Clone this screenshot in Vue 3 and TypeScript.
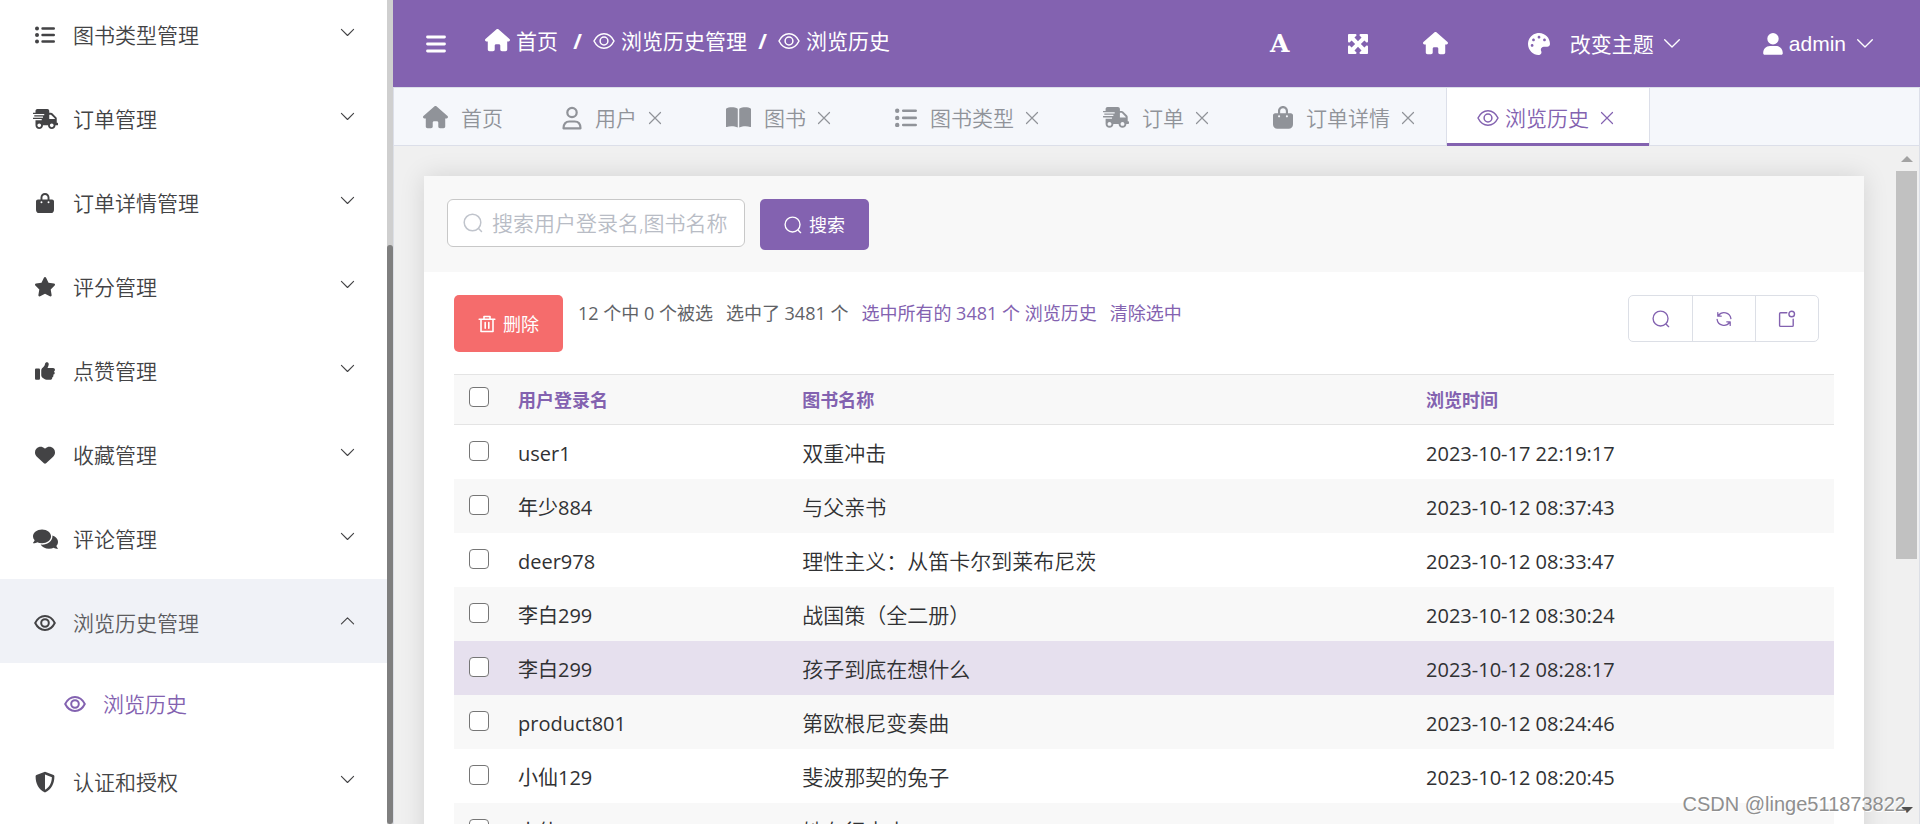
<script setup lang="ts">
import { computed, defineComponent, h, ref } from 'vue'

interface Glyph {
  box: string
  body: string
}

const solid = (box: string, d: string): Glyph => ({ box, body: `<path fill="currentColor" fill-rule="evenodd" d="${d}"/>` })
const line = (box: string, body: string, width: number): Glyph => ({
  box,
  body: `<g fill="none" stroke="currentColor" stroke-width="${width}" stroke-linecap="round" stroke-linejoin="round">${body}</g>`,
})

const glyphs: Record<string, Glyph> = {
  list: line('0 0 20 18', '<path stroke-width="4" d="M2 2.5h.01M2 9h.01M2 15.5h.01"/><path d="M7.5 2.5h11.3M7.5 9h11.3M7.5 15.5h11.3"/>', 2.4),
  truck: solid('0 0 640 512', 'M624 352h-16V243.9c0-12.7-5.1-24.9-14.1-33.9L494 110.1c-9-9-21.2-14.1-33.9-14.1H416V48c0-26.5-21.5-48-48-48H112C85.5 0 64 21.5 64 48v48H8c-4.4 0-8 3.6-8 8v16c0 4.4 3.6 8 8 8h272c4.4 0 8 3.6 8 8v16c0 4.4-3.6 8-8 8H40c-4.4 0-8 3.6-8 8v16c0 4.4 3.6 8 8 8h208c4.4 0 8 3.6 8 8v16c0 4.4-3.6 8-8 8H8c-4.4 0-8 3.6-8 8v16c0 4.4 3.6 8 8 8h208c4.4 0 8 3.6 8 8v16c0 4.4-3.6 8-8 8H64v128c0 53 43 96 96 96s96-43 96-96h128c0 53 43 96 96 96s96-43 96-96h48c8.8 0 16-7.2 16-16v-32c0-8.8-7.2-16-16-16zM160 464c-26.5 0-48-21.5-48-48s21.5-48 48-48 48 21.5 48 48-21.5 48-48 48zm320 0c-26.5 0-48-21.5-48-48s21.5-48 48-48 48 21.5 48 48-21.5 48-48 48zm80-208H416V144h44.1l99.9 99.9V256z'),
  bag: solid('0 0 448 512', 'M160 112c0-35.3 28.7-64 64-64s64 28.7 64 64v48H160V112zm-48 48H48c-26.5 0-48 21.5-48 48V416c0 53 43 96 96 96H352c53 0 96-43 96-96V208c0-26.5-21.5-48-48-48H336V112C336 50.1 285.9 0 224 0S112 50.1 112 112v48zm24 48a24 24 0 1 1 0 48 24 24 0 1 1 0-48zm152 24a24 24 0 1 1 48 0 24 24 0 1 1 -48 0z'),
  star: solid('24 0 528 512', 'M316.9 18C311.6 7 300.4 0 288.1 0s-23.4 7-28.8 18L195 150.3 51.4 171.5c-12 1.8-22 10.2-25.7 21.7s-.7 24.2 7.9 32.7L137.8 329 113.2 474.7c-2 12 3 24.2 12.9 31.3s23 8 33.8 2.3l128.3-68.5 128.3 68.5c10.8 5.7 23.9 4.9 33.8-2.3s14.9-19.3 12.9-31.3L438.5 329 542.7 225.9c8.6-8.5 11.7-21.2 7.9-32.7s-13.7-19.9-25.7-21.7L381.2 150.3 316.9 18z'),
  thumb: solid('0 0 512 512', 'M313.4 32.9c26 5.2 42.9 30.5 37.7 56.5l-2.3 11.4c-5.3 26.7-15.1 52.1-28.8 75.2H464c26.5 0 48 21.5 48 48c0 18.5-10.5 34.6-25.9 42.6C497 275.4 504 288.9 504 304c0 23.4-16.8 42.9-38.9 47.1c4.4 7.3 6.9 15.8 6.9 24.9c0 21.3-13.9 39.4-33.1 45.6c.7 3.3 1.1 6.8 1.1 10.4c0 26.5-21.5 48-48 48H294.5c-19 0-37.5-5.6-53.3-16.1l-38.5-25.7C176 420.4 160 390.4 160 358.3V320 272 247.1c0-29.2 13.3-56.7 36-75l7.4-5.9c26.5-21.2 44.6-51 51.2-84.2l2.3-11.4c5.2-26 30.5-42.9 56.5-37.7zM32 192H96c17.7 0 32 14.3 32 32V448c0 17.7-14.3 32-32 32H32c-17.7 0-32-14.3-32-32V224c0-17.7 14.3-32 32-32z'),
  heart: solid('0 0 512 512', 'M47.6 300.4L228.3 469.1c7.5 7 17.4 10.9 27.7 10.9s20.2-3.9 27.7-10.9L464.4 300.4c30.4-28.3 47.6-68 47.6-109.5v-5.8c0-69.9-50.5-129.5-119.4-141C347 36.5 300.6 51.4 268 84L256 96 244 84c-32.6-32.6-79-47.5-124.6-39.9C50.5 55.6 0 115.2 0 185.1v5.8c0 41.5 17.2 81.2 47.6 109.5z'),
  comments: solid('0 0 576 512', 'M416 192c0-88.4-93.1-160-208-160S0 103.6 0 192c0 34.3 14.1 65.9 38 92-13.4 30.2-35.5 54.2-35.8 54.5-2.2 2.3-2.8 5.7-1.5 8.7S4.8 352 8 352c36.6 0 66.9-12.3 88.7-25 32.2 15.7 70.3 25 111.3 25 114.9 0 208-71.6 208-160zm122 220c23.9-26 38-57.7 38-92 0-66.9-53.5-124.2-129.3-148.1.9 6.6 1.3 13.3 1.3 20.1 0 105.9-107.7 192-240 192-10.8 0-21.3-.8-31.7-1.9C207.8 439.6 281.8 480 368 480c41 0 79.1-9.2 111.3-25 21.8 12.7 52.1 25 88.7 25 3.2 0 6.1-1.9 7.3-4.8 1.3-2.9.7-6.3-1.5-8.7-.3-.3-22.4-24.2-35.8-54.5z'),
  eye: line('0 0 22 18', '<path d="M1.2 9C3.4 4.6 6.8 2 11 2s7.600 2.600 9.800 7c-2.200 4.400-5.600 7-9.800 7S3.400 13.400 1.200 9z"/><circle cx="11" cy="9" r="3.800"/>', 2),
  eyeThin: line('0 0 22 18', '<path d="M1 9C3.300 4.400 6.800 1.800 11 1.800S18.700 4.400 21 9c-2.300 4.600-5.800 7.200-10 7.200S3.300 13.600 1 9z"/><circle cx="11" cy="9" r="3.900"/>', 1.5),
  shield: solid('0 0 20 22', 'M10 .8 18.600 4c.5.200.8.600.8 1.200C19.400 12.500 16.500 18.600 10 21.400 3.500 18.600.6 12.500.6 5.200.6 4.600.9 4.200 1.400 4zM10 3.600V18.700c4.500-2.300 6.700-6.900 6.900-12.500z'),
  home: solid('0 0 576 512', 'M575.8 255.5c0 18-15 32.1-32 32.1h-32l.7 160.2c0 2.7-.2 5.400-.5 8.100V472c0 22.100-17.900 40-40 40H392c-22.100 0-40-17.900-40-40V384c0-17.700-14.300-32-32-32H256c-17.700 0-32 14.300-32 32v88c0 22.100-17.900 40-40 40H104c-22.100 0-40-17.900-40-40V287.600H32c-18 0-32-14-32-32.100c0-9 3-17 10-24L266.400 8c7-7 15-8 22-8s15 2 21 7L564.800 231.500c8 7 12 15 11 24z'),
  person: line('0 0 20 24', '<circle cx="10" cy="6.500" r="4.700"/><path d="M1.500 22.300c0-4.300 2.300-6.800 5.800-6.800h5.400c3.500 0 5.800 2.500 5.800 6.800z"/>', 2.2),
  book: solid('0 0 24 20', 'M0 1.600C3-.2 8 0 11.300 1.600V19.600C8 18.200 3.500 18 .9 19.200.4 19.400 0 19.200 0 18.700zM24 1.600C21-.2 16 0 12.700 1.600V19.600c3.300-1.400 7.800-1.600 10.400-.4.500.2.900 0 .9-.5z'),
  expand: solid('32 32 448 448', 'M200 32H56C42.700 32 32 42.700 32 56V200c0 9.700 5.800 18.500 14.800 22.200s19.300 1.700 26.200-5.200l40-40 79 79-79 79-40-40c-6.900-6.900-17.200-8.900-26.200-5.200S32 302.300 32 312V456c0 13.300 10.700 24 24 24H200c9.700 0 18.500-5.800 22.200-14.800s1.700-19.300-5.200-26.200l-40-40 79-79 79 79-40 40c-6.900 6.900-8.900 17.200-5.200 26.200s12.500 14.800 22.200 14.800H456c13.300 0 24-10.700 24-24V312c0-9.700-5.800-18.500-14.800-22.200s-19.300-1.700-26.200 5.200l-40 40-79-79 79-79 40 40c6.900 6.900 17.200 8.900 26.200 5.200s14.800-12.500 14.800-22.200V56c0-13.300-10.700-24-24-24H312c-9.700 0-18.500 5.800-22.200 14.800s-1.700 19.300 5.200 26.200l40 40-79 79-79-79 40-40c6.900-6.900 8.900-17.200 5.200-26.200S209.700 32 200 32z'),
  palette: solid('0 0 512 512', 'M204.300 5C104.900 24.400 24.800 104.300 5.200 203.400c-37 187 131.700 326.400 258.800 306.700 41.200-6.400 61.400-54.600 42.500-91.700-23.100-45.400 9.900-98.400 60.900-98.400h79.700c35.800 0 64.800-29.600 64.900-65.300C511.500 97.100 368.100-26.900 204.300 5zM96 320c-17.700 0-32-14.300-32-32s14.300-32 32-32 32 14.300 32 32-14.300 32-32 32zm32-128c-17.700 0-32-14.300-32-32s14.300-32 32-32 32 14.300 32 32-14.300 32-32 32zm128-64c-17.700 0-32-14.300-32-32s14.300-32 32-32 32 14.300 32 32-14.300 32-32 32zm128 64c-17.700 0-32-14.300-32-32s14.300-32 32-32 32 14.300 32 32-14.300 32-32 32z'),
  user: solid('0 0 20 22', 'M10 11.500a5.700 5.700 0 1 0 0-11.400 5.700 5.700 0 1 0 0 11.400zM7 13C3 13 .2 16 .2 20.300c0 .9.600 1.500 1.500 1.500h16.600c.9 0 1.500-.6 1.500-1.500C19.800 16 17 13 13 13z'),
  menu: line('0 0 20 18', '<path d="M1.500 2h17M1.500 9h17M1.500 16h17"/>', 2.8),
  down: line('0 0 16 10', '<path d="M1.500 1.500 8 8l6.500-6.500"/>', 1.2),
  up: line('0 0 16 10', '<path d="M1.500 8.500 8 2l6.500 6.500"/>', 1.2),
  close: line('0 0 14 14', '<path d="M1.500 1.500l11 11M12.500 1.500l-11 11"/>', 1.2),
  search: line('0 0 20 20', '<circle cx="9.500" cy="9.500" r="8.300"/><path d="M15.800 15.800l2.700 2.700"/>', 1.5),
  trash: line('0 0 18 18', '<path d="M1.200 4.300h15.600M3 4.300v12.200h12V4.300M6 4V1.500h6V4M7.200 7.500v5.800M10.800 7.500v5.800"/>', 1.6),
  refresh: line('0 0 18 18', '<path d="M2.800 2.600v3.600h3.400M3.400 5.600A6.900 6.900 0 0 1 15.900 8.600M15.200 15.400v-3.600h-3.400M14.600 12.400A6.900 6.900 0 0 1 2.100 9.400"/>', 1.3),
  notice: line('0 0 18 18', '<path d="M8.800 2.800H2.600c-.6 0-1 .4-1 1v11.600c0 .6.400 1 1 1h11.600c.6 0 1-.4 1-1V9.200"/><circle cx="13.700" cy="4" r="2.800"/>', 1.4),
}

const Icon = defineComponent({
  props: { name: { type: String, required: true } },
  setup: (props) => () =>
    h('svg', { viewBox: glyphs[props.name].box, innerHTML: glyphs[props.name].body, 'aria-hidden': 'true' }),
})

interface MenuEntry {
  label: string
  icon: string
  size: string
}

const topMenu: MenuEntry[] = [
  { label: '图书类型管理', icon: 'list', size: 'w20' },
  { label: '订单管理', icon: 'truck', size: 'w25' },
  { label: '订单详情管理', icon: 'bag', size: 'w18' },
  { label: '评分管理', icon: 'star', size: 'w20' },
  { label: '点赞管理', icon: 'thumb', size: 'w20' },
  { label: '收藏管理', icon: 'heart', size: 'w20' },
  { label: '评论管理', icon: 'comments', size: 'w25' },
]

const crumbs = [
  { label: '首页', icon: 'home', size: 'w25' },
  { label: '浏览历史管理', icon: 'eyeThin', size: 'w22' },
  { label: '浏览历史', icon: 'eyeThin', size: 'w22' },
]

const tabs = [
  { label: '首页', icon: 'home', size: 'w25', fixed: true },
  { label: '用户', icon: 'person', size: 'w20' },
  { label: '图书', icon: 'book', size: 'w25' },
  { label: '图书类型', icon: 'list', size: 'w22' },
  { label: '订单', icon: 'truck', size: 'w26' },
  { label: '订单详情', icon: 'bag', size: 'w20' },
  { label: '浏览历史', icon: 'eyeThin', size: 'w22', active: true },
]

interface Row {
  user: string
  title: string
  time: string
  hover?: boolean
}

const rows = ref<Row[]>([
  { user: 'user1', title: '双重冲击', time: '2023-10-17 22:19:17' },
  { user: '年少884', title: '与父亲书', time: '2023-10-12 08:37:43' },
  { user: 'deer978', title: '理性主义：从笛卡尔到莱布尼茨', time: '2023-10-12 08:33:47' },
  { user: '李白299', title: '战国策（全二册）', time: '2023-10-12 08:30:24' },
  { user: '李白299', title: '孩子到底在想什么', time: '2023-10-12 08:28:17', hover: true },
  { user: 'product801', title: '第欧根尼变奏曲', time: '2023-10-12 08:24:46' },
  { user: '小仙129', title: '斐波那契的兔子', time: '2023-10-12 08:20:45' },
  { user: '小仙129', title: '她在行走中', time: '2023-10-12 08:18:32' },
])

const picked = ref<number[]>([])
const keyword = ref('')
const allPicked = computed(() => picked.value.length === rows.value.length)
const toggleAll = () => {
  picked.value = allPicked.value ? [] : rows.value.map((_, i) => i)
}
</script>

<template>
  <div class="shell">
    <aside class="side">
      <nav class="menu">
        <button v-for="m in topMenu" :key="m.label" type="button" class="entry">
          <span class="slot"><Icon :name="m.icon" :class="m.size" /></span>
          <span class="label">{{ m.label }}</span>
          <Icon name="down" class="chev" />
        </button>
        <button type="button" class="entry open">
          <span class="slot"><Icon name="eye" class="w22" /></span>
          <span class="label">浏览历史管理</span>
          <Icon name="up" class="chev" />
        </button>
        <a href="#history" class="sub">
          <Icon name="eye" class="w22" />
          <span>浏览历史</span>
        </a>
        <button type="button" class="entry">
          <span class="slot"><Icon name="shield" class="w20" /></span>
          <span class="label">认证和授权</span>
          <Icon name="down" class="chev" />
        </button>
      </nav>
      <div class="side-track"><div class="side-thumb"></div></div>
    </aside>

    <div class="main">
      <header class="bar">
        <button type="button" class="plain" aria-label="菜单"><Icon name="menu" class="w20" /></button>
        <nav class="crumbs">
          <template v-for="(c, i) in crumbs" :key="c.label">
            <span v-if="i" class="slash">/</span>
            <a href="#" class="crumb"><Icon :name="c.icon" :class="c.size" />{{ c.label }}</a>
          </template>
        </nav>
        <div class="tools">
          <button type="button" class="plain tool letter">A</button>
          <button type="button" class="plain tool" aria-label="全屏"><Icon name="expand" class="w20" /></button>
          <button type="button" class="plain tool" aria-label="主页"><Icon name="home" class="w25" /></button>
        </div>
        <button type="button" class="plain theme"><Icon name="palette" class="w22" /><span>改变主题</span><Icon name="down" class="w18" /></button>
        <button type="button" class="plain account"><Icon name="user" class="w20" /><span>admin</span><Icon name="down" class="w18" /></button>
      </header>

      <nav class="tabs">
        <div v-for="t in tabs" :key="t.label" class="tab" :class="{ active: t.active, fixed: t.fixed }">
          <a href="#" class="tab-link"><Icon :name="t.icon" :class="t.size" />{{ t.label }}</a>
          <button v-if="!t.fixed" type="button" class="plain close" :aria-label="'关闭' + t.label"><Icon name="close" class="w14" /></button>
        </div>
      </nav>

      <div class="view">
        <section class="card">
          <form class="search" @submit.prevent>
            <label class="field">
              <Icon name="search" class="w20" />
              <input v-model="keyword" type="text" placeholder="搜索用户登录名,图书名称" aria-label="搜索" />
            </label>
            <button type="submit" class="go"><Icon name="search" class="w18" />搜索</button>
          </form>

          <div class="body">
            <div class="actions">
              <button type="button" class="delete"><Icon name="trash" class="w18" />删除</button>
              <p class="info">
                <span>12 个中 0 个被选</span>
                <span>选中了 3481 个</span>
                <a href="#">选中所有的 3481 个 浏览历史</a>
                <a href="#">清除选中</a>
              </p>
              <div class="group">
                <button type="button" aria-label="查询"><Icon name="search" class="w18" /></button>
                <button type="button" aria-label="刷新"><Icon name="refresh" class="w18" /></button>
                <button type="button" aria-label="新窗口"><Icon name="notice" class="w18" /></button>
              </div>
            </div>

            <table class="grid">
              <colgroup>
                <col class="c-check" />
                <col class="c-user" />
                <col class="c-title" />
                <col />
              </colgroup>
              <thead>
                <tr>
                  <th class="check"><input type="checkbox" aria-label="全选" :checked="allPicked" @change="toggleAll" /></th>
                  <th>用户登录名</th>
                  <th>图书名称</th>
                  <th>浏览时间</th>
                </tr>
              </thead>
              <tbody>
                <tr v-for="(r, i) in rows" :key="i" :class="{ hover: r.hover }">
                  <td class="check"><input v-model="picked" type="checkbox" :value="i" :aria-label="r.title" /></td>
                  <td class="latin">{{ r.user }}</td>
                  <td>{{ r.title }}</td>
                  <td class="latin">{{ r.time }}</td>
                </tr>
              </tbody>
            </table>
          </div>
        </section>
        <div class="scroll">
          <span class="arrow arrow-up"></span>
          <div class="scroll-thumb"></div>
          <span class="arrow arrow-down"></span>
        </div>
      </div>
    </div>
    <div class="mark">CSDN @linge511873822</div>
  </div>
</template>

<style>
body {
  margin: 0;
  overflow: hidden;
}
</style>

<style scoped>
.shell {
  --accent: #8362b0;
  position: relative;
  display: grid;
  grid-template-columns: 393px minmax(0, 1fr);
  height: 100vh;
  overflow: hidden;
  background: #fff;
  color: #303133;
  font-family: 'Open Sans', 'Noto Sans CJK SC', sans-serif;
  font-size: 21px;
  font-weight: 350;
  line-height: 28px;
}
button,
input {
  font: inherit;
  color: inherit;
}
button {
  border: 0;
  padding: 0;
  background: none;
  white-space: nowrap;
}
a {
  color: inherit;
  text-decoration: none;
  white-space: nowrap;
}
svg {
  display: block;
  flex: none;
}
.w14 { width: 14px; }
.w18 { width: 18px; }
.w20 { width: 20px; }
.w22 { width: 22px; }
.w25 { width: 25px; }
.w26 { width: 26px; }

.side {
  display: flex;
  min-height: 0;
  overflow: hidden;
}
.menu {
  flex: 1;
  display: flex;
  flex-direction: column;
  margin-top: -9px;
  color: #434345;
}
.entry {
  flex: none;
  display: flex;
  align-items: center;
  height: 84px;
  padding: 0 32px 0 30px;
  text-align: left;
}
.slot {
  display: flex;
  justify-content: center;
  width: 30px;
  padding-top: 4px;
}
.label {
  flex: 1;
  padding: 4px 0 0 13px;
}
.chev {
  width: 15px;
}
.open {
  background: #f0f2f7;
}
.open .label {
  color: #5c5c60;
}
.sub {
  flex: none;
  display: flex;
  align-items: center;
  gap: 17px;
  box-sizing: border-box;
  height: 75px;
  padding: 7px 0 0 64px;
  color: var(--accent);
}
.side-track {
  width: 6px;
  display: flex;
  flex-direction: column;
  padding-top: 245px;
  background: #cfcfcf;
}
.side-thumb {
  flex: 1;
  border-radius: 3px;
  background: #7f7f7f;
}

.main {
  display: flex;
  flex-direction: column;
  min-width: 0;
  min-height: 0;
}
.bar {
  flex: none;
  display: flex;
  align-items: center;
  height: 87px;
  padding: 0 46px 0 33px;
  background: var(--accent);
  color: #fff;
  font-weight: 400;
}
.plain {
  display: flex;
  align-items: center;
}
.crumbs {
  display: flex;
  align-items: center;
  gap: 8px;
  padding: 0 0 6px 39px;
}
.crumb {
  display: flex;
  align-items: center;
  gap: 6px;
}
.crumb:first-child {
  margin-right: 4px;
}
.slash {
  width: 15px;
  text-align: center;
  font-weight: 700;
}
.tools {
  display: flex;
  margin-left: auto;
}
.tool {
  justify-content: center;
  width: 78px;
}
.letter {
  font-family: 'DejaVu Serif', serif;
  font-size: 25px;
  font-weight: 700;
}
.theme {
  margin-left: 53px;
}
.theme span {
  margin: 0 9px 0 20px;
}
.account {
  margin-left: 82px;
}
.account span {
  margin: 0 10px 0 6px;
  font-family: 'Liberation Sans', sans-serif;
}

.tabs {
  flex: none;
  display: flex;
  height: 57px;
  border: 1px solid #dcdfe9;
  background: #f5f7fb;
  color: #909399;
}
.tab {
  display: flex;
  align-items: center;
  gap: 11px;
  padding: 2px 30px 0 32px;
  border: solid transparent;
  border-width: 0 1px;
}
.tab.fixed {
  padding: 2px 25px 0 28px;
}
.tab-link {
  display: flex;
  align-items: center;
  gap: 13px;
}
.tab.active {
  height: 56px;
  padding: 2px 35px 0 30px;
  border-color: #dcdfe9;
  background: #fff;
  color: var(--accent);
  box-shadow: inset 0 -3px 0 var(--accent);
}
.tab.active .tab-link {
  gap: 6px;
}

.view {
  flex: 1;
  display: flex;
  min-height: 0;
  padding-left: 30px;
  border: solid #dcdfe6;
  border-width: 0 1px;
  background: #f0f0f0;
}
.card {
  flex: 1;
  min-width: 0;
  align-self: flex-start;
  margin-top: 30px;
  background: #fff;
  box-shadow: 0 0 24px rgba(0, 0, 0, 0.12);
}
.search {
  display: flex;
  align-items: flex-start;
  gap: 15px;
  padding: 23px 23px 22px;
  background: #f8f8f8;
}
.field {
  display: flex;
  align-items: center;
  gap: 9px;
  box-sizing: border-box;
  width: 298px;
  height: 48px;
  padding: 0 14px 0 15px;
  border: 1px solid #c8c8c8;
  border-radius: 6px;
  background: #fff;
  color: #c0c4cc;
}
.field input {
  min-width: 0;
  width: 240px;
  height: 40px;
  padding: 0;
  border: 0;
  outline: 0;
  background: none;
  color: #303133;
}
.field input::placeholder {
  color: #b8bcc5;
}
.go,
.delete {
  display: flex;
  align-items: center;
  justify-content: center;
  gap: 7px;
  width: 109px;
  border-radius: 5px;
  color: #fff;
  font-size: 18px;
  font-weight: 400;
}
.go {
  height: 51px;
  background: var(--accent);
}
.delete {
  height: 57px;
  background: #f56c6c;
}
.body {
  padding: 23px 30px 0;
}
.actions {
  display: flex;
  align-items: flex-start;
}
.info {
  display: flex;
  gap: 13px;
  margin: 4px 0 0 15px;
  color: #606266;
  font-size: 18px;
  font-weight: 400;
  white-space: nowrap;
}
.info a {
  color: var(--accent);
}
.group {
  display: flex;
  margin: 0 15px 0 auto;
  border: 1px solid #dcdfe6;
  border-radius: 5px;
}
.group button {
  display: flex;
  align-items: center;
  justify-content: center;
  width: 63px;
  height: 45px;
  color: var(--accent);
}
.group button + button {
  border-left: 1px solid #dcdfe6;
}

.grid {
  width: 100%;
  margin-top: 22px;
  border-collapse: separate;
  border-spacing: 0;
  table-layout: fixed;
}
.c-check { width: 64px; }
.c-user { width: 20.6%; }
.c-title { width: 45.2%; }
.grid th {
  box-sizing: border-box;
  height: 51px;
  padding: 0;
  border: solid #e4e4e4;
  border-width: 1px 0;
  background: #f8f8f8;
  color: var(--accent);
  font-size: 18px;
  font-weight: 700;
  text-align: left;
}
.grid td {
  box-sizing: border-box;
  height: 54px;
  padding: 2px 0 0;
}
.grid td.latin {
  padding-top: 3px;
  font-size: 20px;
  font-weight: 400;
}
.grid tbody tr:nth-child(even) {
  background: #f8f8f8;
}
.grid tbody tr.hover {
  background: #e6e0ee;
}
.grid td.check {
  padding: 0 0 2px 15px;
}
.grid th.check {
  padding: 0 0 6px 15px;
}
.check input {
  display: block;
  appearance: none;
  box-sizing: border-box;
  width: 20px;
  height: 20px;
  margin: 0;
  border: 1px solid #767676;
  border-radius: 4px;
  background: #fff;
}
.check input:checked {
  background: var(--accent);
}

.scroll {
  display: flex;
  flex-direction: column;
  align-items: center;
  width: 21px;
  margin: 0 2px 0 32px;
  padding: 10px 0 11px;
}
.arrow {
  border: solid transparent;
  border-width: 0 6px;
}
.arrow-up {
  border-bottom: 6px solid #a3a3a3;
}
.arrow-down {
  margin-top: auto;
  border-top: 6px solid #505050;
}
.scroll-thumb {
  width: 100%;
  height: 59%;
  margin-top: 9px;
  background: #c1c1c1;
}
.mark {
  position: absolute;
  right: 14px;
  bottom: 6px;
  color: #8f8f8f;
  font-family: 'Liberation Sans', sans-serif;
  font-size: 20px;
  font-weight: 400;
  text-shadow: 1px 1px 0 #fff;
}
</style>
